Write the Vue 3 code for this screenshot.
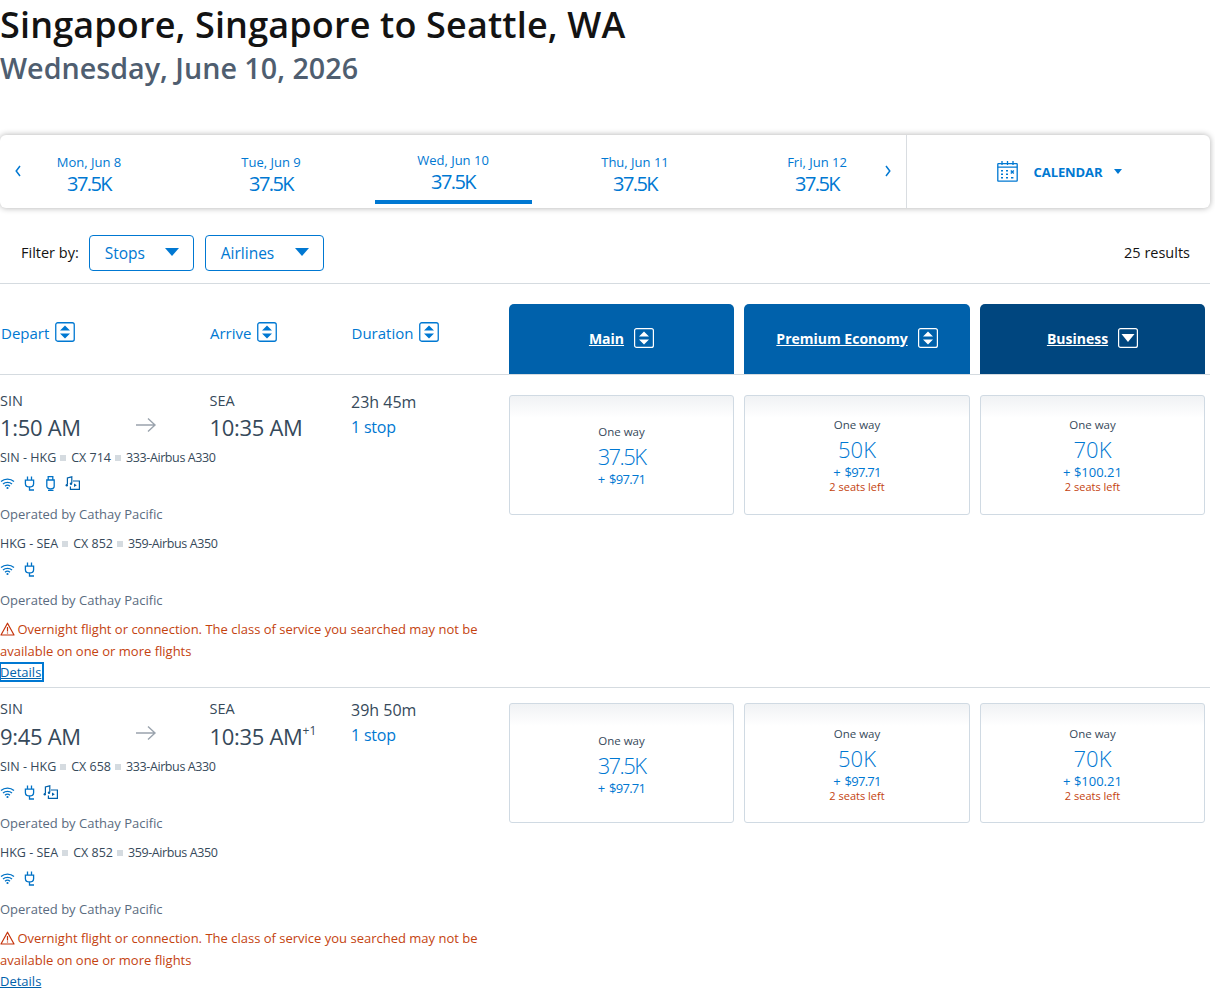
<script setup>
const dates = [
  { label: 'Mon, Jun 8', value: '37.5K' },
  { label: 'Tue, Jun 9', value: '37.5K' },
  { label: 'Wed, Jun 10', value: '37.5K', active: true },
  { label: 'Thu, Jun 11', value: '37.5K' },
  { label: 'Fri, Jun 12', value: '37.5K' },
]
const cols = [
  { name: 'Main', tone: '', sort: 'both' },
  { name: 'Premium Economy', tone: '', sort: 'both' },
  { name: 'Business', tone: 'dark', sort: 'down' },
]
const fares = [
  { points: '37.5K', cash: '+ $97.71', tight: true },
  { points: '50K', cash: '+ $97.71', seats: '2 seats left' },
  { points: '70K', cash: '+ $100.21', seats: '2 seats left' },
]
const flights = [
  {
    depart: '1:50 AM', arrive: '10:35 AM', plus: false, duration: '23h 45m', focus: true,
    legs: [
      { route: 'SIN - HKG', no: 'CX 714', plane: '333-Airbus A330', icons: ['wifi', 'plug', 'usb', 'media'] },
      { route: 'HKG - SEA', no: 'CX 852', plane: '359-Airbus A350', icons: ['wifi', 'plug'] },
    ],
  },
  {
    depart: '9:45 AM', arrive: '10:35 AM', plus: true, duration: '39h 50m', focus: false,
    legs: [
      { route: 'SIN - HKG', no: 'CX 658', plane: '333-Airbus A330', icons: ['wifi', 'plug', 'media'] },
      { route: 'HKG - SEA', no: 'CX 852', plane: '359-Airbus A350', icons: ['wifi', 'plug'] },
    ],
  },
]
</script>

<template>
  <main class="page">
    <h1 class="title">Singapore, Singapore to Seattle, WA</h1>
    <h2 class="subtitle">Wednesday, June 10, 2026</h2>

    <section class="datebar">
      <div class="dates">
        <svg class="chev chev-l" width="6" height="12" viewBox="0 0 6 12" fill="none" stroke="#0078d2" stroke-width="1.5"><path d="M5 1L1.2 6 5 11"/></svg>
        <div v-for="d in dates" :key="d.label" class="date" :class="{ active: d.active }">
          <span class="date-label">{{ d.label }}</span>
          <span class="date-value">{{ d.value }}</span>
        </div>
        <svg class="chev chev-r" width="6" height="12" viewBox="0 0 6 12" fill="none" stroke="#0078d2" stroke-width="1.5"><path d="M1 1l3.8 5L1 11"/></svg>
      </div>
      <div class="calendar">
        <svg class="cal-icon" width="21" height="22" viewBox="0 0 21 22" fill="none" stroke="#0078d2" stroke-width="1.3">
          <rect x="0.8" y="3.6" width="19.4" height="17.6" rx="0.6" />
          <path d="M0.8 7.2h19.4M5 1v4M10.5 1v4M16 1v4" />
          <path d="M4 10.8h2M9 10.8h2M4 14.2h2M9 14.2h2M4 17.8h2M9 17.8h2M14 17.8h2.4" stroke-width="1.5" />
          <path d="M13.8 10.4l3 3M16.8 10.4l-3 3" stroke-width="1.4" />
        </svg>
        <span class="cal-text">CALENDAR</span>
        <span class="cal-caret"></span>
      </div>
    </section>

    <section class="filters">
      <span class="filter-label">Filter by:</span>
      <button class="select select-stops"><span>Stops</span><i class="caret"></i></button>
      <button class="select select-air"><span>Airlines</span><i class="caret"></i></button>
      <span class="results">25 results</span>
    </section>

    <section class="head">
      <div class="head-left">
        <div class="sort sort-depart">Depart
          <svg class="sort-ico" width="20" height="20" viewBox="0 0 20 20"><rect x="0.75" y="0.75" width="18.5" height="18.5" rx="2" fill="none" stroke="#0078d2" stroke-width="1.3"/><path d="M10 3.5l5 5H5zM10 16.5l-5-5h10z" fill="#0078d2"/></svg>
        </div>
        <div class="sort sort-arrive">Arrive
          <svg class="sort-ico" width="20" height="20" viewBox="0 0 20 20"><rect x="0.75" y="0.75" width="18.5" height="18.5" rx="2" fill="none" stroke="#0078d2" stroke-width="1.3"/><path d="M10 3.5l5 5H5zM10 16.5l-5-5h10z" fill="#0078d2"/></svg>
        </div>
        <div class="sort">Duration
          <svg class="sort-ico" width="20" height="20" viewBox="0 0 20 20"><rect x="0.75" y="0.75" width="18.5" height="18.5" rx="2" fill="none" stroke="#0078d2" stroke-width="1.3"/><path d="M10 3.5l5 5H5zM10 16.5l-5-5h10z" fill="#0078d2"/></svg>
        </div>
      </div>
      <div class="fare-grid">
        <div v-for="c in cols" :key="c.name" class="cabin" :class="c.tone">
          <a class="cabin-name">{{ c.name }}</a>
          <svg width="20" height="20" viewBox="0 0 20 20">
            <rect x="0.6" y="0.6" width="18.8" height="18.8" rx="2" fill="none" stroke="#fff" stroke-width="1.2"/>
            <path v-if="c.sort === 'both'" d="M10 3.5l5 5H5zM10 16.5l-5-5h10z" fill="#fff"/>
            <path v-else d="M3.5 6h13L10 14z" fill="#fff"/>
          </svg>
        </div>
      </div>
    </section>

    <article v-for="(f, fi) in flights" :key="f.depart" class="flight" :class="{ last: fi === 1 }">
      <div class="info">
        <div class="times">
          <div class="t-depart">
            <div class="code">SIN</div>
            <div class="time">{{ f.depart }}</div>
          </div>
          <svg class="arrow" width="22" height="16" viewBox="0 0 22 16" fill="none" stroke="#9aa3ad" stroke-width="1.4"><path d="M1 8h19M13 1.5L20 8l-7 6.5"/></svg>
          <div class="t-arrive">
            <div class="code">SEA</div>
            <div class="time">{{ f.arrive }}<sup v-if="f.plus" class="plus">+1</sup></div>
          </div>
          <div class="t-dur">
            <div class="dur">{{ f.duration }}</div>
            <a class="stops">1 stop</a>
          </div>
        </div>
        <div v-for="(l, li) in f.legs" :key="li" class="leg">
          <div class="leg-line">
            <span>{{ l.route }}</span><i class="sq"></i><span>{{ l.no }}</span><i class="sq"></i><span class="plane">{{ l.plane }}</span>
          </div>
          <div class="amenities">
            <template v-for="ic in l.icons" :key="ic">
              <svg v-if="ic === 'wifi'" width="15" height="15" viewBox="0 0 15 15" fill="none" stroke="#0072c6" stroke-width="1.3"><path d="M1 5.6c3.6-3.2 9.4-3.2 13 0M3 8c2.5-2.2 6.5-2.2 9 0M5 10.2c1.4-1.2 3.6-1.2 5 0"/><circle cx="7.5" cy="12" r="1.1" fill="#0072c6" stroke="none"/></svg>
              <svg v-else-if="ic === 'plug'" width="15" height="15" viewBox="0 0 15 15" fill="none" stroke="#0072c6" stroke-width="1.3"><path d="M5.5 0.5v3.6M9.5 0.5v3.6M3.4 4.2h8.2v3.6c0 2-1.8 3.2-4.1 3.2s-4.1-1.2-4.1-3.2zM7.5 11v3h4.5"/></svg>
              <svg v-else-if="ic === 'usb'" width="15" height="15" viewBox="0 0 15 15" fill="none" stroke="#0072c6" stroke-width="1.3"><path d="M5.2 0.6h4.6v3.4H5.2zM3.8 4h7.4v6.2c0 1.6-1.6 2.6-3.7 2.6s-3.7-1-3.7-2.6zM5 14.4h5.5"/></svg>
              <svg v-else width="15" height="15" viewBox="0 0 15 15" fill="none" stroke="#0061ab" stroke-width="1.2"><path d="M2.4 8.6V2l4.4-1.2v6.4"/><circle cx="1.8" cy="9.2" r="1.2" fill="#0061ab" stroke="none"/><circle cx="6" cy="7.8" r="1.2" fill="#0061ab" stroke="none"/><path d="M8 5h6.4v8.4H5.4v-3"/><path d="M9 7.4l2.8 1.8L9 11z" fill="#0061ab" stroke="none"/></svg>
            </template>
          </div>
          <div class="operated">Operated by Cathay Pacific</div>
        </div>
        <p class="warning">
          <svg class="warn-ico" width="15" height="14" viewBox="0 0 15 14" fill="none" stroke="#c4320a" stroke-width="1.2"><path d="M7.5 1.2L14 13H1z" stroke-linejoin="round"/><path d="M7.5 5v4.4M7.5 10.4v1.2"/></svg>
          Overnight flight or connection. The class of service you searched may not be available on one or more flights
        </p>
        <a class="details" :class="{ focus: f.focus }">Details</a>
      </div>
      <div class="fare-grid fare-row">
        <div v-for="fa in fares" :key="fa.points" class="fare">
          <span class="way">One way</span>
          <span class="points" :class="{ tight: fa.tight }">{{ fa.points }}</span>
          <span class="cash" :class="{ tightish: fa.cash === '+ $97.71' }">{{ fa.cash }}</span>
          <span v-if="fa.seats" class="seats">{{ fa.seats }}</span>
        </div>
      </div>
    </article>
  </main>
</template>

<style>
html, body { margin: 0; background: #fff; height: 995px; overflow: hidden; }
</style>

<style scoped>
.page {
  width: 1210px;
  font-family: "Open Sans", "Noto Sans", sans-serif;
  color: #36495a;
}
.title {
  margin: 0;
  padding-top: 1px;
  font-size: 36px;
  line-height: 48px;
  font-weight: 600;
  letter-spacing: 0.15px;
  color: #131313;
}
.subtitle {
  margin: 0;
  font-size: 28.7px;
  line-height: 37px;
  font-weight: 600;
  color: #4f5e70;
}
.datebar {
  margin-top: 49px;
  height: 73px;
  display: flex;
  border-radius: 6px;
  background: #fff;
  box-shadow: 0 0 6px rgba(0, 0, 0, 0.32);
}
.dates {
  position: relative;
  width: 908px;
  display: grid;
  grid-template-columns: repeat(5, 182px);
  justify-content: start;
  margin-left: -2px;
  border-right: 1px solid #d9dde1;
}
.date {
  position: relative;
  display: flex;
  flex-direction: column;
  align-items: center;
  padding-top: 18px;
  color: #0078d2;
}
.date.active { padding-top: 16px; }
.date.active::after {
  content: "";
  position: absolute;
  left: 13px;
  bottom: 4px;
  width: 157px;
  height: 4px;
  background: #0078d2;
}
.date-label { font-size: 13px; line-height: 18px; }
.date-value { font-size: 20px; line-height: 26px; letter-spacing: -1.6px; }
.chev { position: absolute; top: 30px; }
.chev-l { left: 17px; }
.chev-r { left: 887px; }
.calendar {
  flex: 1;
  display: flex;
  align-items: center;
  justify-content: center;
  padding-left: 2px;
  color: #0078d2;
}
.cal-icon { margin-right: 16px; margin-top: -2px; }
.cal-text { font-size: 13px; font-weight: 700; letter-spacing: -0.1px; }
.cal-caret {
  margin-left: 12px;
  width: 0;
  height: 0;
  border-left: 4px solid transparent;
  border-right: 4px solid transparent;
  border-top: 5px solid #0078d2;
}
.filters {
  margin-top: 27px;
  height: 36px;
  display: flex;
  align-items: center;
  padding-bottom: 12px;
  border-bottom: 1px solid #d5dbe0;
}
.filter-label {
  margin-left: 21px;
  margin-right: 10px;
  margin-top: -2px;
  font-size: 14.5px;
  color: #131313;
}
.select {
  box-sizing: border-box;
  height: 36px;
  display: flex;
  align-items: center;
  justify-content: space-between;
  padding: 0 14px 0 15px;
  margin-right: 11px;
  background: #fff;
  border: 1px solid #0078d2;
  border-radius: 4px;
  font: inherit;
  font-size: 15.5px;
  color: #0078d2;
}
.select-stops { width: 105px; }
.select-air { width: 119px; }
.caret {
  width: 0;
  height: 0;
  border-left: 7px solid transparent;
  border-right: 7px solid transparent;
  border-top: 8px solid #0078d2;
  margin-top: -3px;
}
.results {
  margin-left: auto;
  margin-right: 20px;
  margin-top: -2px;
  font-size: 14.5px;
  color: #131313;
}
.head {
  margin-top: 20px;
  height: 70px;
  display: flex;
  border-bottom: 1px solid #d5dbe0;
}
.head-left {
  width: 509px;
  display: grid;
  grid-template-columns: 210px 141.5px 1fr;
  padding-top: 18px;
  box-sizing: border-box;
}
.sort {
  display: flex;
  align-items: flex-start;
  gap: 6px;
  font-size: 15px;
  line-height: 23px;
  color: #0078d2;
}
.sort-depart { padding-left: 1px; }
.fare-grid {
  flex: 1;
  display: grid;
  grid-template-columns: 225px 226px 225px;
  column-gap: 10px;
}
.cabin {
  display: flex;
  align-items: center;
  justify-content: center;
  gap: 10px;
  padding-bottom: 2px;
  background: #0061ab;
  border-radius: 5px 5px 0 0;
  color: #fff;
}
.cabin.dark { background: #00467f; }
.cabin-name {
  font-size: 14px;
  font-weight: 700;
  text-decoration: underline;
}
.flight {
  display: flex;
  height: 312px;
  border-bottom: 1px solid #d5dbe0;
}
.flight.last { border-bottom: 0; height: 308px; }
.info { width: 509px; box-sizing: border-box; padding-right: 25px; }
.times {
  position: relative;
  display: grid;
  grid-template-columns: 209.5px 141.5px 1fr;
  padding-top: 16px;
  margin-bottom: 3px;
}
.arrow { position: absolute; left: 135px; top: 42px; }
.flight.last .times { padding-top: 11px; }
.flight.last .time { margin-top: 1px; }
.flight.last .arrow { top: 37px; }
.code { font-size: 14.5px; line-height: 19px; }
.time { font-size: 22px; line-height: 34px; letter-spacing: -0.3px; white-space: nowrap; }
.plus { font-size: 12px; line-height: 0; vertical-align: 10px; letter-spacing: 0; }
.dur { font-size: 16px; line-height: 22px; }
.stops { font-size: 16px; line-height: 28px; color: #0078d2; letter-spacing: -0.2px; }
.leg-line {
  display: flex;
  align-items: center;
  height: 20px;
  font-size: 12.5px;
  color: #36495a;
}
.plane { letter-spacing: -0.4px; }
.sq {
  width: 6px;
  height: 6px;
  margin: 1px 5px 0 4px;
  background: #d5dbe0;
}
.amenities {
  display: flex;
  gap: 6.5px;
  height: 16px;
  margin-top: 8.5px;
}
.operated {
  margin-top: 12px;
  font-size: 13px;
  line-height: 20px;
  color: #5a6b80;
}
.leg { margin-bottom: 10px; }
.leg:last-of-type { margin-bottom: 8px; }
.warning {
  margin: 0;
  font-size: 13px;
  line-height: 22px;
  color: #c4430f;
}
.warn-ico { vertical-align: -2px; margin-right: -1px; }
.details {
  display: block;
  width: fit-content;
  margin-top: 1px;
  font-size: 13px;
  line-height: 18px;
  color: #0061ab;
  text-decoration: underline;
  padding-right: 2px;
}
.details.focus { outline: 2px solid #0078d2; outline-offset: -1px; }
.fare-row { padding-top: 20px; align-items: start; }
.flight.last .fare-row { padding-top: 15px; }
.flight.last .fare { padding-top: 2px; }
.fare {
  box-sizing: border-box;
  height: 120px;
  display: flex;
  flex-direction: column;
  align-items: center;
  justify-content: center;
  border: 1px solid #d0dae3;
  border-radius: 3px;
  background: linear-gradient(#f0f2f4 0, #fff 22px);
}
.way { font-size: 11.5px; line-height: 18px; color: #36495a; }
.points { font-size: 22px; line-height: 30px; font-weight: 300; color: #0078d2; }
.points.tight { letter-spacing: -1.6px; }
.cash { font-size: 13px; line-height: 17px; color: #0078d2; }
.cash.tightish { letter-spacing: -0.75px; word-spacing: 2px; }
.seats { font-size: 11px; line-height: 13px; margin: -1px 0 1px; color: #c4430f; }
</style>
